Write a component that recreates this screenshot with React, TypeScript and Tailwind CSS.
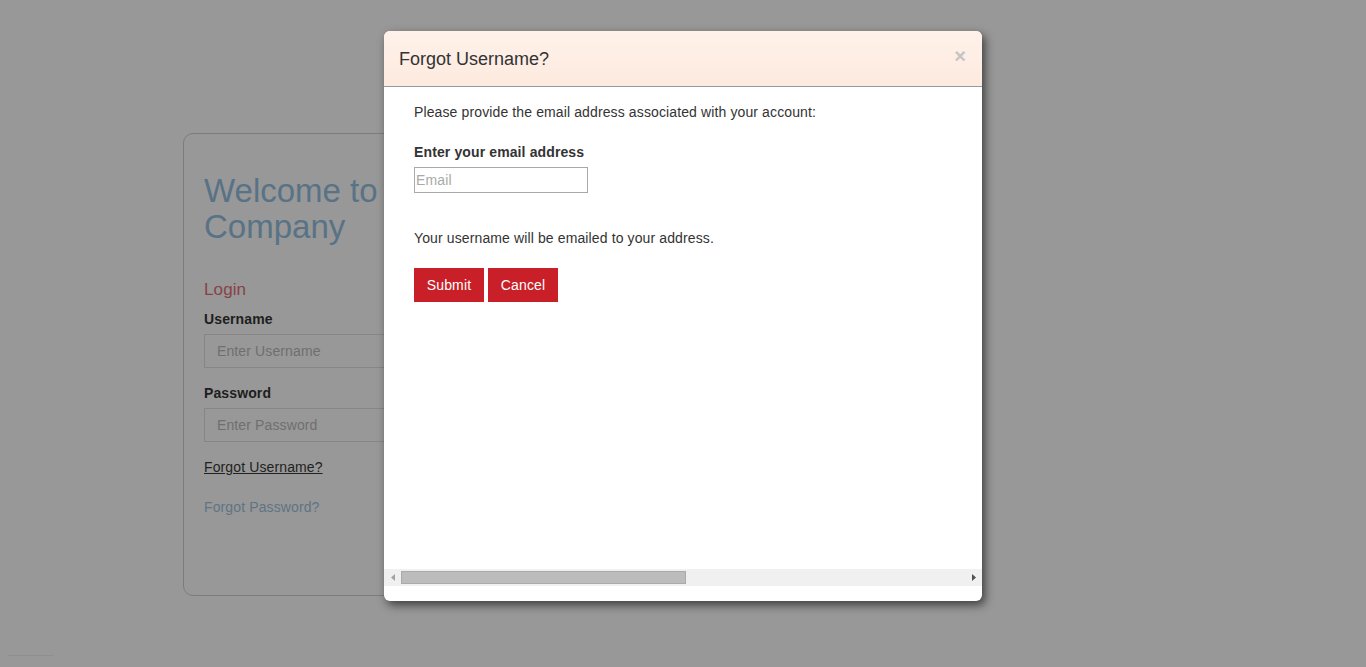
import React from "react";

export default function App() {
  const font = { fontFamily: '"Liberation Sans", Arial, sans-serif' };
  return (
    <div className="relative h-[667px] w-[1366px] overflow-hidden bg-[#989898] tracking-[0.12px]" style={font}>
      <div className="flex pl-[183px] pt-[133px]">
        <div className="flex h-[463px] w-[430px] flex-col rounded-[10px] border border-[#7c7c7c] px-[20px] pt-[39px]">
          <div className="text-[33px] leading-[36px] tracking-normal text-[#587286]">
            Welcome to
            <br />
            Company
          </div>
          <div className="mt-[35px] text-[17px] leading-[20px] text-[#874249]">Login</div>
          <div className="mt-[9px] text-[14px] font-bold leading-[20px] text-[#1e1e1e]">Username</div>
          <div className="mt-[5px] flex h-[34px] items-center border border-[#868686] px-[12px] text-[14px] text-[#6f6f6f]">
            Enter Username
          </div>
          <div className="mt-[15px] text-[14px] font-bold leading-[20px] text-[#1e1e1e]">Password</div>
          <div className="mt-[5px] flex h-[34px] items-center border border-[#868686] px-[12px] text-[14px] text-[#6f6f6f]">
            Enter Password
          </div>
          <div className="mt-[15px] text-[14px] leading-[20px] text-[#222] underline">Forgot Username?</div>
          <div className="mt-[20px] text-[14px] leading-[20px] text-[#5f7484]">Forgot Password?</div>
        </div>
      </div>
      <div className="absolute left-[8px] top-[655px] h-px w-[45px] bg-[#8f8f8f]" />

      <div className="absolute left-[384px] top-[31px] flex h-[570px] w-[598px] flex-col overflow-hidden rounded-[6px] bg-white shadow-[3px_4px_10px_rgba(0,0,0,0.6)]">
        <div className="flex h-[56px] shrink-0 items-center justify-between border-b border-[#999] bg-gradient-to-b from-[#fff2ea] to-[#fdeadf] pl-[15px] pr-[16px]">
          <div className="pt-[1px] text-[18px] tracking-normal text-[#333]">Forgot Username?</div>
          <div className="-mt-[6px] text-[20px] font-bold leading-none text-[#c4c4c4]">×</div>
        </div>
        <div className="flex flex-1 flex-col px-[30px] pt-[15px]">
          <div className="text-[14px] leading-[20px] text-[#333]">
            Please provide the email address associated with your account:
          </div>
          <div className="mt-[20px] text-[14px] font-bold leading-[20px] text-[#333]">Enter your email address</div>
          <div className="mt-[5px] flex h-[26px] w-[174px] items-center border border-[#a9a9a9] px-[1px] text-[14px] text-[#a9a9a9]">
            Email
          </div>
          <div className="mt-[35px] text-[14px] leading-[20px] text-[#333]">
            Your username will be emailed to your address.
          </div>
          <div className="mt-[20px] flex gap-[4px]">
            <div className="flex h-[34px] w-[70px] items-center justify-center bg-[#c81f28] text-[14px] text-white">
              Submit
            </div>
            <div className="flex h-[34px] w-[70px] items-center justify-center bg-[#c81f28] text-[14px] text-white">
              Cancel
            </div>
          </div>
        </div>
        <div className="mb-[15px] flex h-[17px] shrink-0 items-center bg-[#f0f0f0]">
          <div className="flex w-[17px] items-center justify-center">
            <svg width="4" height="7" viewBox="0 0 4 7">
              <path d="M4 0 L0 3.5 L4 7 Z" fill="#a3a3a3" />
            </svg>
          </div>
          <div className="h-[13px] w-[285px] border border-[#aaa] bg-[#bcbcbc]" />
          <div className="flex-1" />
          <div className="flex w-[17px] items-center justify-center">
            <svg width="4" height="7" viewBox="0 0 4 7">
              <path d="M0 0 L4 3.5 L0 7 Z" fill="#505050" />
            </svg>
          </div>
        </div>
      </div>
    </div>
  );
}
